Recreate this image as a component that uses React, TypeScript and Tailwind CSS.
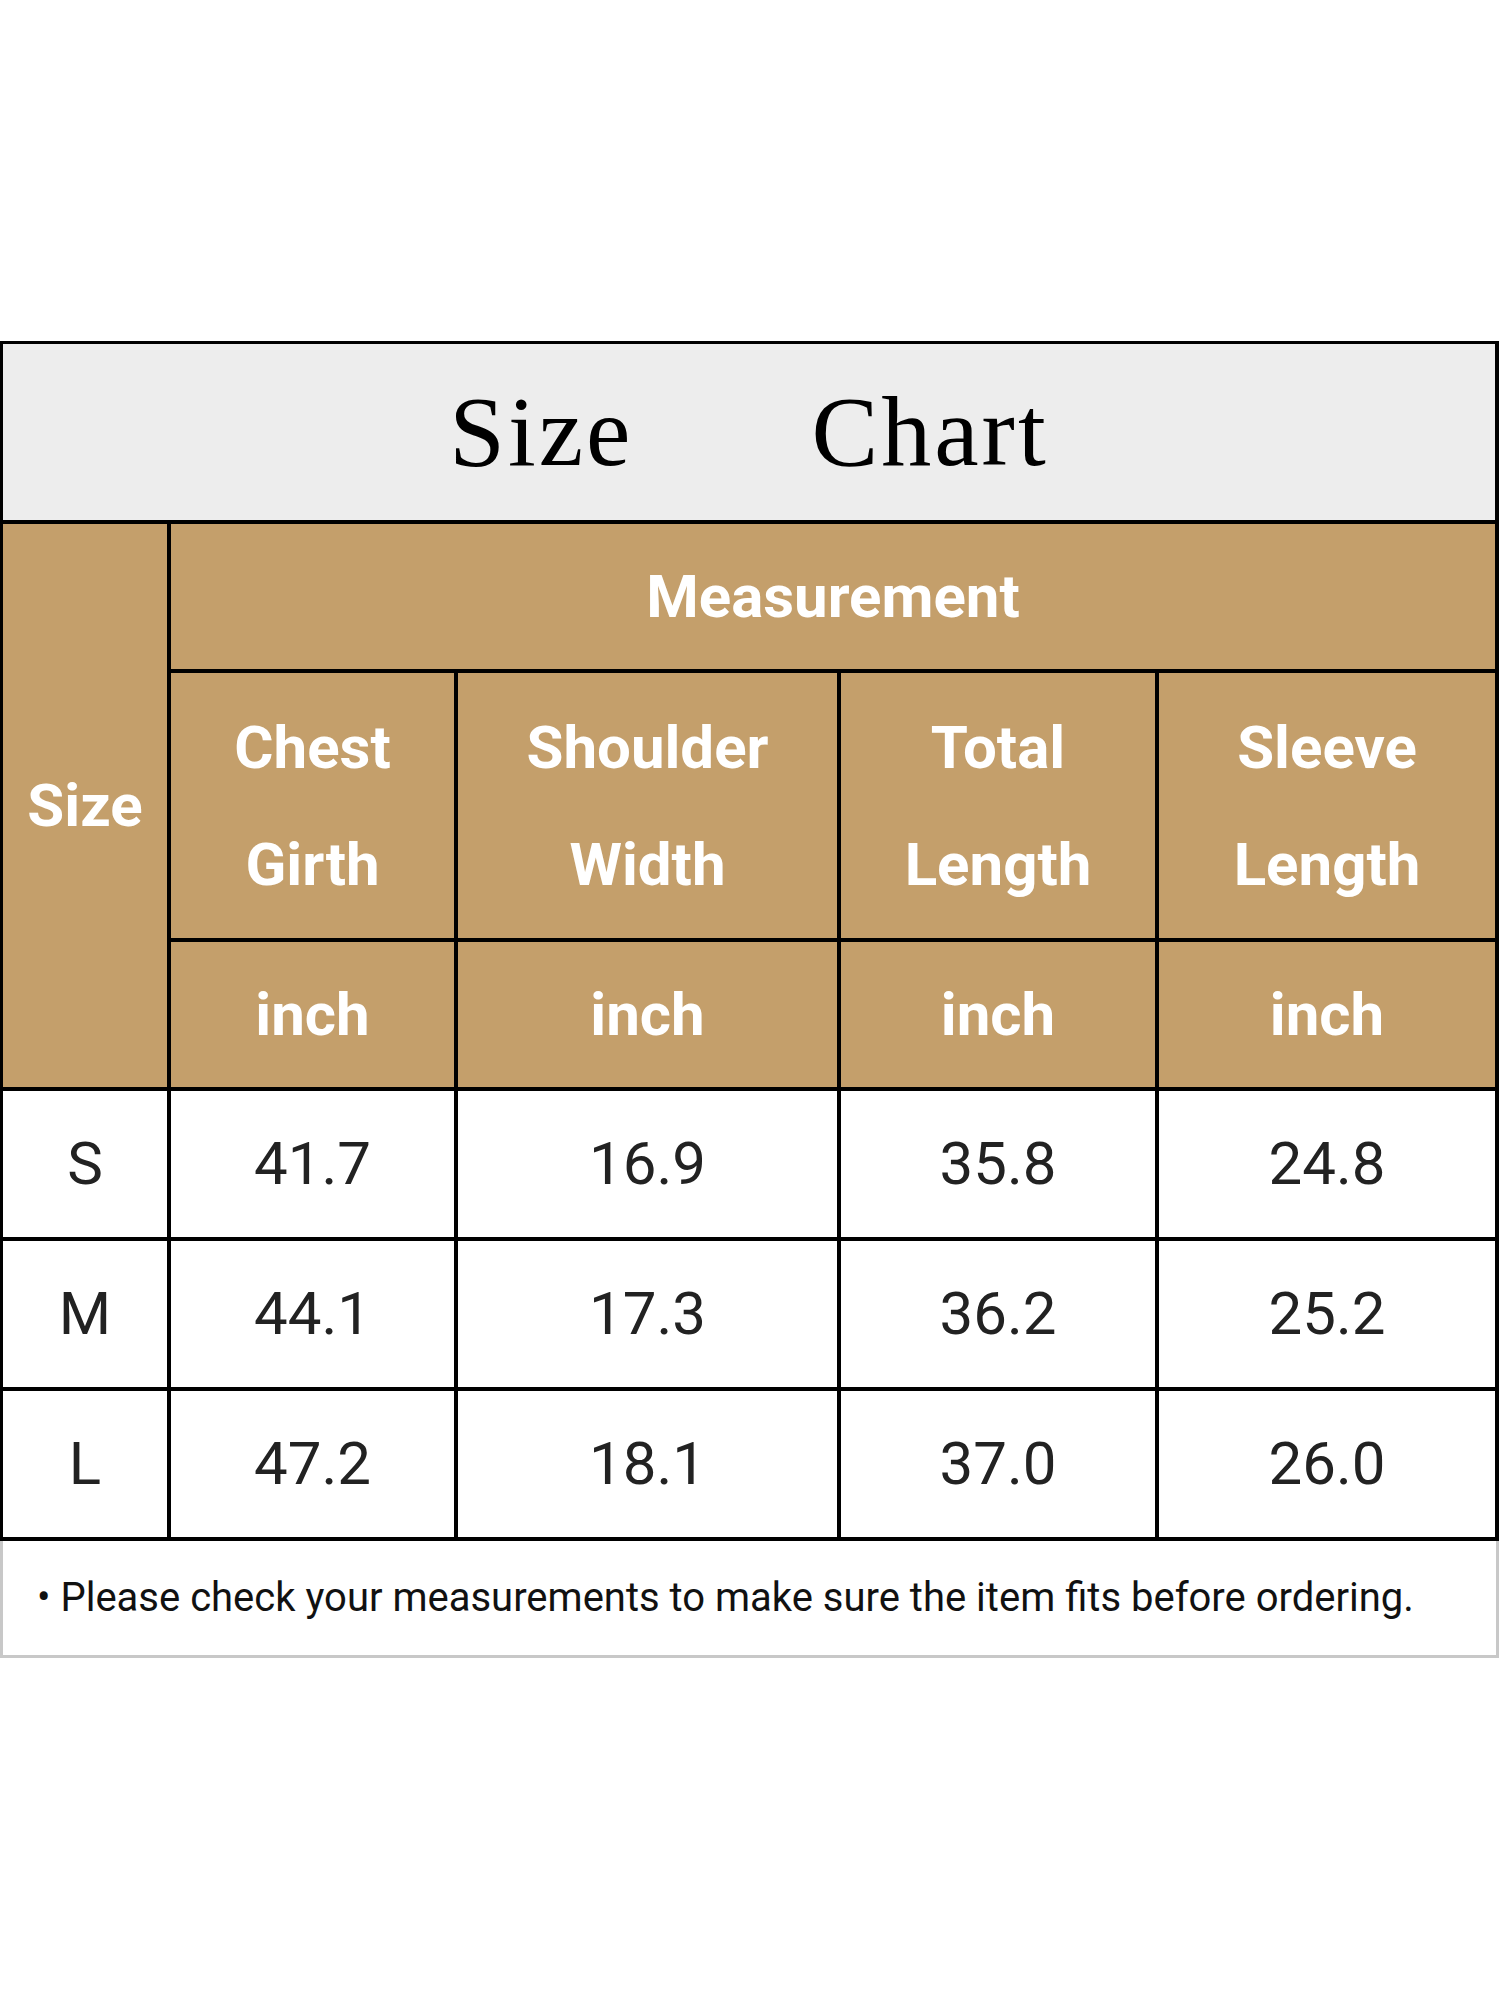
const measurements = [
  { size: "S", chest: "41.7", shoulder: "16.9", total: "35.8", sleeve: "24.8" },
  { size: "M", chest: "44.1", shoulder: "17.3", total: "36.2", sleeve: "25.2" },
  { size: "L", chest: "47.2", shoulder: "18.1", total: "37.0", sleeve: "26.0" },
];

const headers = [
  ["Chest", "Girth"],
  ["Shoulder", "Width"],
  ["Total", "Length"],
  ["Sleeve", "Length"],
];

const tan = "bg-[#c49f6b]";

export default function App() {
  return (
    <div className="w-[1500px] min-h-[2000px] bg-white pt-[341px] font-['Roboto',sans-serif]">
      <div className="grid grid-cols-[164px_283px_379px_314px_336px] grid-rows-[176px_145px_265px_145px_146px_146px_146px] gap-[4px] bg-black pl-[3px] pr-[4px] pt-[3px] pb-[4px] w-[1499px]">
        {/* Title */}
        <div className="col-span-5 bg-[#ededed] flex items-center justify-center gap-[178px] text-black font-['Liberation_Serif',serif] text-[100px] leading-none tracking-[3px]">
          <span>Size</span>
          <span>Chart</span>
        </div>

        {/* Header block */}
        <div className={`row-span-3 ${tan} flex items-center justify-center text-white font-bold text-[60px] leading-none`}>
          Size
        </div>
        <div className={`col-span-4 ${tan} flex items-center justify-center text-white font-bold text-[60px] leading-none`}>
          Measurement
        </div>
        {headers.map(([a, b]) => (
          <div key={a + b} className={`${tan} flex flex-col items-center justify-center text-white font-bold text-[60px] leading-[117px]`}>
            <span>{a}</span>
            <span>{b}</span>
          </div>
        ))}
        {headers.map(([a]) => (
          <div key={a} className={`${tan} flex items-center justify-center text-white font-bold text-[60px] leading-none`}>
            inch
          </div>
        ))}

        {/* Data rows */}
        {measurements.map((m) => (
          [m.size, m.chest, m.shoulder, m.total, m.sleeve].map((v, i) => (
            <div key={m.size + i} className="bg-white flex items-center justify-center text-[#222] text-[60px] leading-none">
              {v}
            </div>
          ))
        ))}
      </div>

      <div className="w-[1499px] h-[117px] border-x-[3px] border-b-[3px] border-[#c8c8c8] flex items-center pl-[34px] text-[#111] text-[40px] leading-none">
        • Please check your measurements to make sure the item fits before ordering.
      </div>
    </div>
  );
}
